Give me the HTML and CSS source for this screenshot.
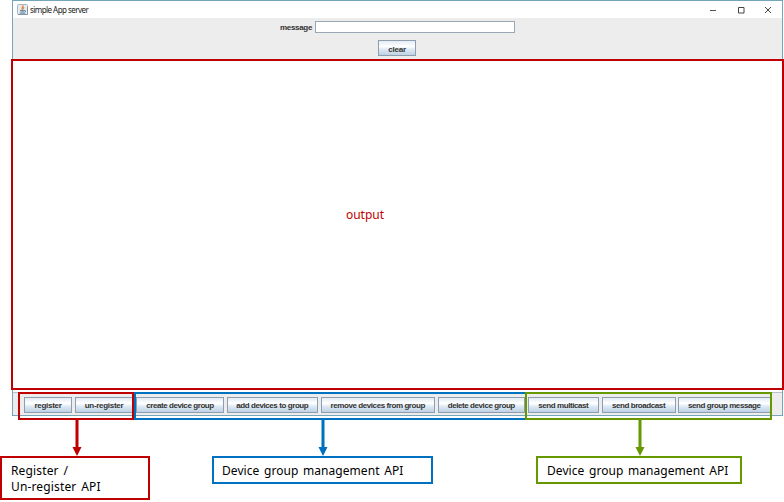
FILE: index.html
```html
<!DOCTYPE html>
<html lang="en">
<head>
<meta charset="utf-8">
<title>simple App server</title>
<link rel="stylesheet" href="styles.css">
</head>
<body>
<main class="stage">
  <section class="window">
    <header class="titlebar">
      <svg class="app-icon" width="11" height="11" viewBox="0 0 11 11">
        <rect x=".5" y=".5" width="10" height="10" rx="1" fill="#e4ebf1" stroke="#a9b7c3"/>
        <path d="M1 10.5h9.5V3" fill="none" stroke="#8494a2"/>
        <path d="M5.8 1.2C6.5 3 4 3.5 5.3 5.8M7 3C5.800 4 5.900 4.400 6.400 5.500" fill="none" stroke="#e68a45" stroke-width="1.300"/>
        <path d="M3 6.500h4.800M3.400 7.900h4M2.600 9.200h5.600M7.800 6.500c1.500 0 1 1.400-.2 1.500" fill="none" stroke="#57809f" stroke-width=".9"/>
      </svg>
      <h1 class="title">simple App server</h1>
      <div class="controls">
        <svg width="8" height="8" viewBox="0 0 8 8"><path d="M1 4.500h6" stroke="#555" fill="none"/></svg>
        <svg width="8" height="8" viewBox="0 0 8 8"><path d="M1.500 1.500h5.500v5.500h-5.500z" stroke="#444" fill="none"/></svg>
        <svg width="8" height="8" viewBox="0 0 8 8"><path d="M1 1l6 6M7 1L1 7" stroke="#444" fill="none"/></svg>
      </div>
    </header>
    <div class="form">
      <label class="message-row"><span class="message-label">message</span><input class="message" type="text"></label>
      <button class="btn clear">clear</button>
    </div>
    <div class="output"><span class="output-label">output</span></div>
    <footer class="actions">
      <button class="btn w-register">register</button>
      <button class="btn w-unregister">un-register</button>
      <button class="btn w-create">create device group</button>
      <button class="btn w-add">add devices to group</button>
      <button class="btn w-remove">remove devices from group</button>
      <button class="btn w-delete">delete device group</button>
      <button class="btn w-multicast">send multicast</button>
      <button class="btn w-broadcast">send broadcast</button>
      <button class="btn w-message">send group message</button>
    </footer>
  </section>

  <div class="frame frame-output"></div>
  <div class="frame frame-blue"></div>
  <div class="frame frame-red"></div>
  <div class="frame frame-green"></div>

  <svg class="arrow arrow-red" width="10" height="37" viewBox="0 0 10 37"><path d="M3.500 0h3v28h3L5 37 .5 28h3z"/></svg>
  <svg class="arrow arrow-blue" width="10" height="37" viewBox="0 0 10 37"><path d="M3.500 0h3v28h3L5 37 .5 28h3z"/></svg>
  <svg class="arrow arrow-green" width="10" height="37" viewBox="0 0 10 37"><path d="M3.500 0h3v28h3L5 37 .5 28h3z"/></svg>

  <p class="note note-red">Register /<br>Un-register API</p>
  <p class="note note-blue">Device group management API</p>
  <p class="note note-green">Device group management API</p>
</main>
</body>
</html>
```
FILE: styles.css
```css
* { box-sizing: border-box; }
body { margin: 0; background: #fff; overflow: hidden; }
.stage { position: relative; width: 784px; height: 502px; }

.window {
  display: flex;
  flex-direction: column;
  width: 771px;
  height: 416px;
  margin-left: 12px;
  border: 1px solid #74a5b9;
  background: #ededed;
}
.titlebar {
  display: flex;
  align-items: center;
  height: 17px;
  padding: 0 10px 0 4px;
  background: #fff;
}
.title {
  margin: 0 0 0 2px;
  font: 400 8px/16px "Noto Sans", sans-serif;
  letter-spacing: -0.550px;
  color: #222;
  white-space: nowrap;
}
.controls { display: flex; gap: 19.500px; margin-left: auto; }
.controls svg { display: block; }

.form {
  display: flex;
  flex-direction: column;
  align-items: center;
  height: 42px;
  padding-top: 3px;
  font: 700 8px/14px "Liberation Sans", sans-serif;
  letter-spacing: -0.300px;
  color: #333;
}
.message-row { display: flex; align-items: center; gap: 2.500px; height: 12px; }
.message-label { padding-top: 2px; }
.message {
  width: 200.500px;
  height: 12px;
  padding: 0;
  border: 1px solid #9aa8b5;
  background: #fff;
}
.btn {
  flex: none;
  height: 16px;
  padding: 1px 0 0;
  border: 1px solid #8e9eb0;
  border-radius: 0;
  background: linear-gradient(#e3ecf4, #fff 38%, #dce8f3 62%, #bed2e5);
  font: 700 8px/13px "Liberation Sans", sans-serif;
  letter-spacing: -0.420px;
  color: #333;
  text-align: center;
  white-space: nowrap;
}
.clear { width: 38px; margin: 7px 1px 0 0; padding-top: 2px; letter-spacing: -0.200px; }

.output {
  display: flex;
  align-items: center;
  justify-content: center;
  flex: 1;
  background: #fff;
}
.output-label {
  margin: 0 65px 23px 0;
  font: 400 12px/16px "Noto Sans", sans-serif;
  color: #c00000;
}
.actions {
  display: flex;
  align-items: flex-start;
  gap: 2.500px;
  height: 23px;
  padding: 4px 0 0 11px;
  border-top: 1px solid #b5c3cd;
}
.w-register { width: 48px; letter-spacing: -0.300px; }
.w-unregister { width: 59px; letter-spacing: -0.300px; }
.w-create { width: 88px; }
.w-add { width: 91.500px; }
.w-remove { width: 114.500px; }
.w-delete { width: 87.500px; }
.w-multicast { width: 71.500px; }
.w-broadcast { width: 74px; }
.w-message { width: 92.500px; }

.frame { position: absolute; border: 2px solid; }
.frame-output { left: 11px; top: 59px; width: 773px; height: 331px; color: #c00000; }
.frame-red { left: 18px; top: 392px; width: 116px; height: 28px; color: #c00000; }
.frame-blue { left: 134px; top: 392px; width: 393px; height: 28px; color: #0070c0; }
.frame-green { left: 525px; top: 392px; width: 247px; height: 28px; color: #669900; }

.arrow { position: absolute; top: 419px; }
.arrow-red { left: 71.500px; fill: #c00000; }
.arrow-blue { left: 317.500px; fill: #0070c0; }
.arrow-green { left: 634.500px; fill: #669900; }

.note {
  position: absolute;
  top: 456px;
  height: 28px;
  margin: 0;
  padding: 5px 0 0 8px;
  border: 2px solid;
  background: #fff;
  font: 400 12px/16px "Noto Sans", sans-serif;
  letter-spacing: 0.050px;
  word-spacing: 1.500px;
  -webkit-text-fill-color: #000;
  white-space: nowrap;
}
.note-red { left: 0; width: 150px; height: 44px; padding-left: 9px; color: #c00000; letter-spacing: 0.150px; }
.note-blue { left: 212px; width: 221px; color: #0070c0; }
.note-green { left: 536px; width: 206px; padding-left: 9px; color: #669900; }
```
